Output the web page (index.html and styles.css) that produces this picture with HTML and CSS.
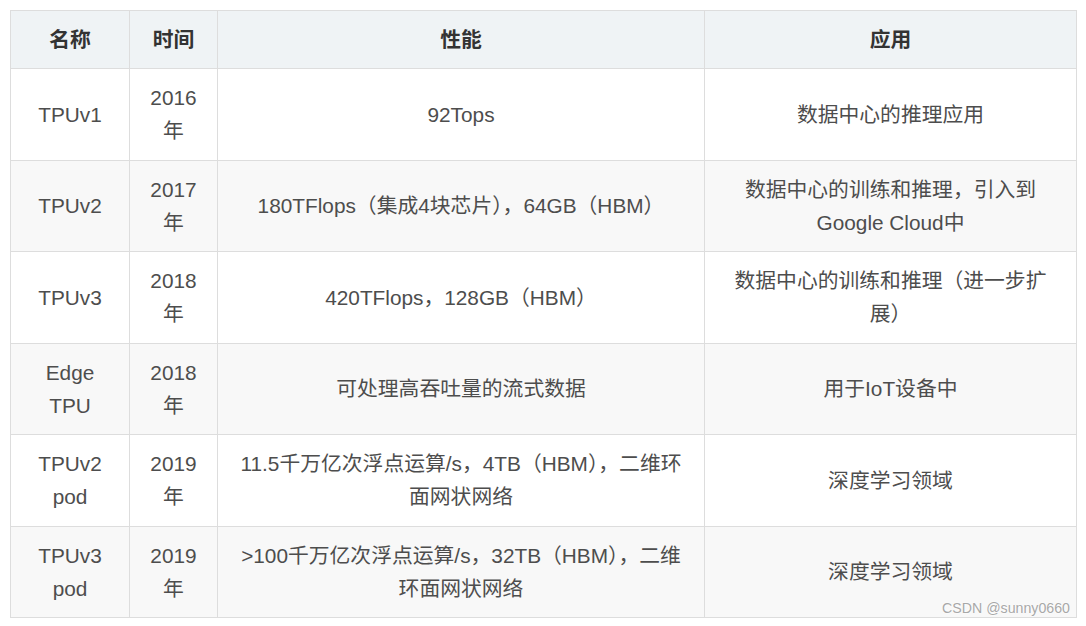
FILE: index.html
```html
<!DOCTYPE html>
<html lang="zh">
<head>
<meta charset="utf-8">
<title>TPU</title>
<link rel="stylesheet" href="styles.css">
</head>
<body>
<div class="wrap">
<table class="tbl">
  <colgroup>
    <col class="c1"><col class="c2"><col class="c3"><col class="c4">
  </colgroup>
  <thead>
    <tr><th>名称</th><th>时间</th><th>性能</th><th>应用</th></tr>
  </thead>
  <tbody>
    <tr><td>TPUv1</td><td>2016年</td><td>92Tops</td><td>数据中心的推理应用</td></tr>
    <tr><td>TPUv2</td><td>2017年</td><td>180TFlops（集成4块芯片），64GB（HBM）</td><td>数据中心的训练和推理，引入到Google Cloud中</td></tr>
    <tr><td>TPUv3</td><td>2018年</td><td>420TFlops，128GB（HBM）</td><td>数据中心的训练和推理（进一步扩展）</td></tr>
    <tr><td>Edge TPU</td><td>2018年</td><td>可处理高吞吐量的流式数据</td><td>用于IoT设备中</td></tr>
    <tr><td>TPUv2 pod</td><td>2019年</td><td>11.5千万亿次浮点运算/s，4TB（HBM），二维环面网状网络</td><td>深度学习领域</td></tr>
    <tr><td>TPUv3 pod</td><td>2019年</td><td>&gt;100千万亿次浮点运算/s，32TB（HBM），二维环面网状网络</td><td>深度学习领域</td></tr>
  </tbody>
</table>
<div class="mark">CSDN @sunny0660</div>
</div>
</body>
</html>
```
FILE: styles.css
```css
html, body {
  margin: 0;
  padding: 0;
  background: #ffffff;
}
body {
  font-family: "Liberation Sans", "Noto Sans CJK SC", sans-serif;
  color: #4d4d4d;
}
.wrap {
  position: relative;
  width: 1066px;
  margin: 10px 0 0 10px;
}
.tbl {
  width: 1066px;
  table-layout: fixed;
  border-collapse: collapse;
  border: 1px solid #d6d6d6;
  font-size: 20.8px;
  line-height: 33px;
}
.c1 { width: 119px; }
.c2 { width: 88px; }
.c3 { width: 487px; }
.c4 { width: 372px; }
.tbl th, .tbl td {
  border: 1px solid #dddddd;
  padding: 12.25px 15px;
  text-align: center;
  vertical-align: middle;
}
.tbl th {
  padding: 12px 15px;
  background: #eff3f5;
  color: #333333;
  font-weight: bold;
}
.tbl tbody tr:nth-child(even) td {
  background: #f8f8f8;
}
.mark {
  position: absolute;
  right: 6px;
  bottom: 1px;
  font-size: 14.2px;
  line-height: 18px;
  color: #a8a8a8;
  text-shadow: 0 0 2px #ffffff, 0 0 2px #ffffff;
}
```
